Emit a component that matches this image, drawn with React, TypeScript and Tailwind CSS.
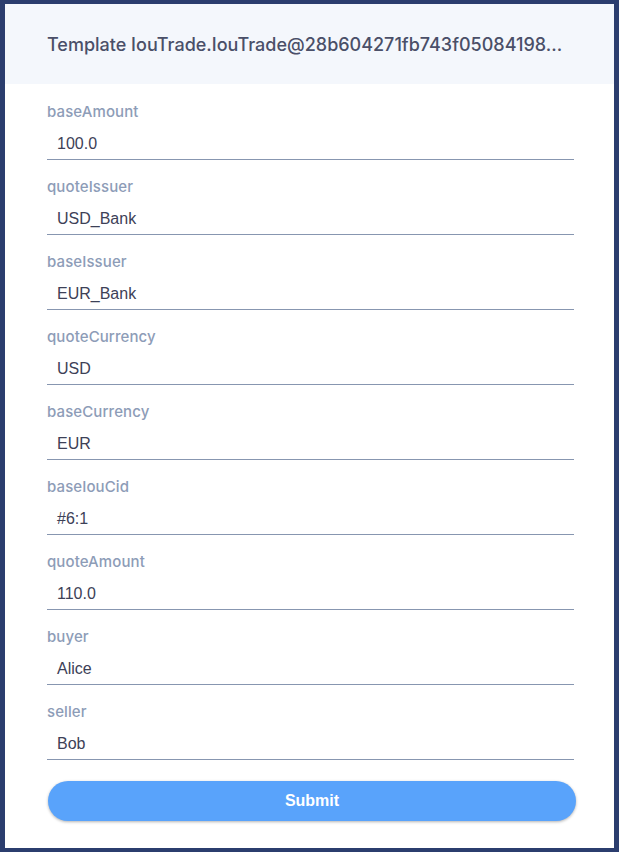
import React from "react";

const fields: [string, string][] = [
  ["baseAmount", "100.0"],
  ["quoteIssuer", "USD_Bank"],
  ["baseIssuer", "EUR_Bank"],
  ["quoteCurrency", "USD"],
  ["baseCurrency", "EUR"],
  ["baseIouCid", "#6:1"],
  ["quoteAmount", "110.0"],
  ["buyer", "Alice"],
  ["seller", "Bob"],
];

export default function App() {
  return (
    <div className="w-[619px] h-[852px] bg-[#2b3d6e] pt-[4px] pb-[4px] px-[5px]">
      <div className="w-full h-full bg-white flex flex-col">
        <div className="h-[80px] bg-[#f4f7fc] flex items-center pl-[42px]">
          <span
            className="text-[18px] font-medium text-[#4a4f68] whitespace-nowrap"
            style={{ fontFamily: "Inter, 'Open Sans', sans-serif" }}
          >
            Template IouTrade.IouTrade@28b604271fb743f05084198...
          </span>
        </div>
        <div className="pl-[42px] pr-[40px] pt-[18px] flex flex-col gap-[17px]">
          {fields.map(([label, value]) => (
            <div key={label} className="flex flex-col">
              <div
                className="h-[20px] leading-[20px] text-[15px] font-medium tracking-[0.1px] text-[#8d9cb7]"
                style={{ fontFamily: "Inter, 'Open Sans', sans-serif" }}
              >
                {label}
              </div>
              <div
                className="mt-[3px] h-[35px] border-b border-[#8796b0] pl-[10px] pt-[4px] flex items-center text-[16px] text-[#3d4157]"
                style={{ fontFamily: "'Liberation Sans', Arial, sans-serif" }}
              >
                {value}
              </div>
            </div>
          ))}
        </div>
        <div className="pl-[43px] pr-[38px] mt-[21px]">
          <button
            className="w-full h-[40px] rounded-full bg-[#59a3fb] text-white text-[16px] font-bold shadow-[0_1px_3px_rgba(0,0,0,0.3)]"
            style={{ fontFamily: "'Liberation Sans', Arial, sans-serif" }}
          >
            Submit
          </button>
        </div>
      </div>
    </div>
  );
}
